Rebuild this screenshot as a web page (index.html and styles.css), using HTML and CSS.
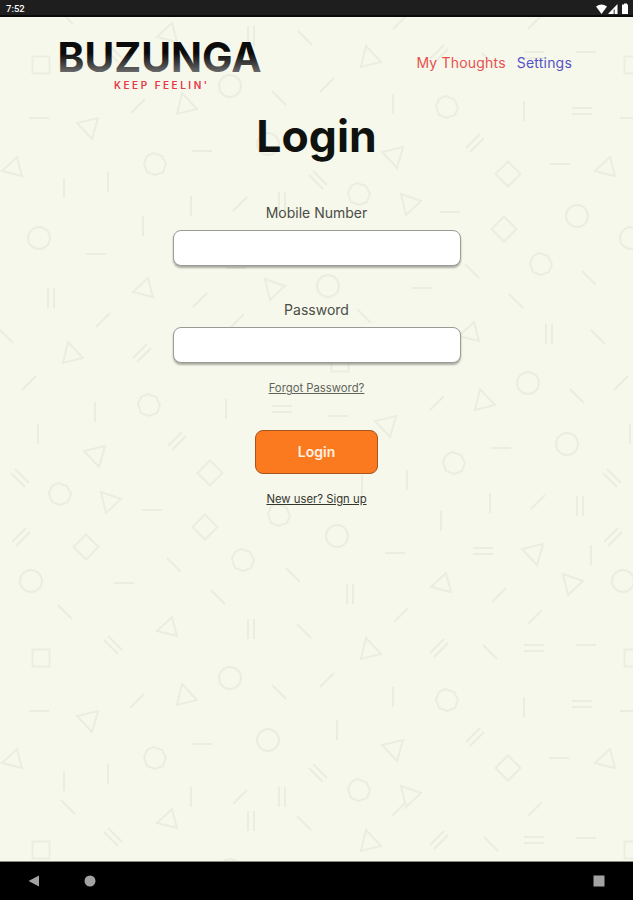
FILE: index.html
```html
<!DOCTYPE html>
<html lang="en">
<head>
  <meta charset="UTF-8">
  <meta name="viewport" content="width=device-width, initial-scale=1.0">
  <title>Buzunga - Login</title>
  <link rel="stylesheet" href="styles.css">
</head>
<body>
  <div class="status-bar">
    <span class="time">7:52</span>
    <svg class="status-icons" width="34" height="12" viewBox="0 0 34 12">
      <path d="M1 3.500Q6.500 -0.500 12 3.500L6.500 11Z"/>
      <path d="M22.500 1V11H13Z"/>
      <path d="M18.500 11V6.500H20V11Z" fill="#777"/>
      <path d="M28 1.500H29V0.500H32V1.500H33V11H27V1.500Z"/>
    </svg>
  </div>

  <main class="screen">
    <svg class="pattern" id="pattern" viewBox="0 17 633 844">
      <defs>
        <path id="triA" d="M-11 3L4 -11L9 8Z"/>
        <path id="triB" d="M-4 -11L11 5L-9 10Z"/>
        <path id="triC" d="M-11 -5L10 -10L4 11Z"/>
        <path id="triD" d="M-9 -10L11 -3L-4 11Z"/>
        <circle id="circle" r="11"/>
        <path id="hept" d="M-2 -11L7 -8L11 0L8 8L0 11L-8 8L-11 -1L-8 -8Z"/>
        <path id="diamond" d="M0 -12.500L12.500 0L0 12.500L-12.500 0Z"/>
        <path id="square" d="M-8.500 -8.500H8.500V8.500H-8.500Z"/>
        <path id="h" d="M-10 0H10"/>
        <path id="v" d="M0 -10V10"/>
        <path id="up" d="M-7 7L7 -7"/>
        <path id="down" d="M-7 -7L7 7"/>
        <path id="hh" d="M-10 -3H10M-10 3H10"/>
        <path id="vv" d="M-3 -10V10M3 -10V10"/>
        <path id="upup" d="M-9 5L5 -9M-5 9L9 -5"/>
        <path id="downdown" d="M-5 -9L9 5M-9 -5L5 9"/>
      </defs>
    </svg>

    <header class="header">
      <div class="logo">
        <svg width="204" height="54" viewBox="0 0 204 54">
          <defs>
            <linearGradient id="logoFill" gradientUnits="userSpaceOnUse" x1="0" y1="3" x2="0" y2="35">
              <stop offset="0.350" stop-color="#0b0b0b"/>
              <stop offset="1" stop-color="#737373"/>
            </linearGradient>
          </defs>
          <text class="logo-name" x="-1.500" y="33" textLength="204" lengthAdjust="spacingAndGlyphs">BUZUNGA</text>
          <text class="logo-tag" x="55" y="50" textLength="93">KEEP FEELIN'</text>
        </svg>
      </div>
      <nav class="nav">
        <a class="thoughts">My Thoughts</a>
        <a class="settings">Settings</a>
      </nav>
    </header>

    <form class="login-form">
      <h1>Login</h1>
      <label for="mobile">Mobile Number</label>
      <input type="text" id="mobile">
      <label for="password">Password</label>
      <input type="password" id="password">
      <a class="forgot">Forgot Password?</a>
      <button type="button">Login</button>
      <a class="signup">New user? Sign up</a>
    </form>
  </main>

  <div class="nav-bar">
    <svg width="12" height="12" viewBox="0 0 12 12"><path d="M0.500 6L11 0.500V11.500Z"/></svg>
    <svg width="12" height="12" viewBox="0 0 12 12"><circle cx="6" cy="6" r="5.500"/></svg>
    <svg class="recent" width="12" height="12" viewBox="0 0 12 12"><rect x="0.500" y="0.500" width="11" height="11"/></svg>
  </div>

  <script>
    // centre of every shape in the background
    const shapes = {
      triA: [[168,34],[13,168],[606,168],[144,289],[470,333],[442,584],[168,628],[13,760],[606,760],[168,820]],
      triB: [[186,104],[370,57],[72,353],[484,400],[186,695],[370,649],[370,841]],
      triC: [[88,128],[393,157],[95,456],[386,426],[533,554],[88,721],[393,750]],
      triD: [[274,289],[410,204],[110,502],[572,584],[410,796]],
      circle: [[230,86],[268,144],[39,238],[577,216],[631,238],[328,286],[528,383],[31,581],[567,444],[337,536],[623,581],[230,678],[268,740],[230,870]],
      hept: [[155,164],[447,107],[359,194],[541,264],[149,405],[60,494],[243,560],[279,515],[454,463],[155,758],[447,700],[359,790]],
      diamond: [[508,174],[504,229],[210,473],[205,527],[86,547],[508,768]],
      square: [[41,65],[633,65],[340,363],[41,658],[633,658],[41,850],[633,850]],
      h: [[39,118],[202,151],[586,52],[630,118],[560,164],[96,254],[236,268],[450,212],[422,288],[152,510],[124,583],[338,416],[501,448],[395,553],[39,711],[202,744],[586,645],[630,711],[559,758],[586,838]],
      v: [[64,188],[108,182],[393,104],[524,111],[191,206],[143,226],[95,412],[226,409],[38,434],[407,480],[362,485],[630,434],[490,503],[441,521],[591,555],[64,781],[108,774],[393,697],[524,707],[337,730],[191,797]],
      up: [[138,106],[400,22],[535,22],[327,85],[240,204],[200,300],[103,320],[29,383],[237,321],[437,403],[621,383],[538,502],[499,595],[401,615],[535,617],[137,701],[327,680],[240,797],[399,809],[535,809]],
      down: [[66,17],[305,38],[279,98],[489,60],[6,336],[472,271],[589,278],[516,301],[364,316],[598,337],[577,396],[174,565],[293,575],[218,597],[65,612],[304,631],[279,692],[490,652],[68,807],[304,823],[491,844]],
      hh: [[534,55],[582,111],[282,409],[483,551],[534,648],[582,704],[534,840]],
      vv: [[251,36],[282,202],[51,298],[549,334],[580,506],[350,594],[251,629],[282,797],[251,821]],
      upup: [[439,54],[475,143],[142,353],[177,441],[21,537],[613,537],[439,648],[475,737],[439,840]],
      downdown: [[113,53],[318,180],[20,478],[612,478],[113,645],[318,773],[113,837]]
    };

    const pattern = document.getElementById("pattern");
    Object.keys(shapes).forEach(name => {
      shapes[name].forEach(([x, y]) => {
        const use = document.createElementNS("http://www.w3.org/2000/svg", "use");
        use.setAttribute("href", "#" + name);
        use.setAttribute("x", x);
        use.setAttribute("y", y);
        pattern.appendChild(use);
      });
    });
  </script>
</body>
</html>
```
FILE: styles.css
```css
* {
  box-sizing: border-box;
}

body {
  margin: 0;
  height: 900px;
  display: flex;
  flex-direction: column;
  overflow: hidden;
  font-family: Inter, sans-serif;
  background-color: #000;
}

.status-bar {
  height: 17px;
  padding: 2px 4px 0 6px;
  display: flex;
  justify-content: space-between;
  background-color: #1e1e1e;
  border-bottom: 2px solid #0a0a0a;
}

.time {
  font-family: Roboto, sans-serif;
  font-size: 9.5px;
  font-weight: 500;
  line-height: 14px;
  color: #fff;
}

.status-icons {
  fill: #fff;
  margin-top: 1px;
}

.screen {
  position: relative;
  height: 844px;
  background-color: #f6f8eb;
  overflow: hidden;
}

.pattern {
  position: absolute;
  top: 0;
  left: 0;
  width: 633px;
  height: 844px;
  fill: none;
  stroke: #ebede0;
  stroke-width: 2;
}

.header {
  position: relative;
  display: flex;
  justify-content: space-between;
  padding: 22px 61px 0 59px;
  height: 92px;
}

.logo svg {
  display: block;
  overflow: visible;
}

.logo-name {
  font-family: Inter, sans-serif;
  font-size: 41px;
  font-weight: 700;
  fill: url(#logoFill);
}

.logo-tag {
  font-family: Inter, sans-serif;
  font-size: 10px;
  font-weight: 600;
  fill: #e8384a;
}

.nav {
  display: flex;
  gap: 11px;
  padding-top: 15px;
  font-size: 14px;
  line-height: 18px;
  letter-spacing: 0.2px;
}

.thoughts {
  color: #e8504f;
}

.settings {
  color: #5552c8;
}

.login-form {
  position: relative;
  display: flex;
  flex-direction: column;
  align-items: center;
}

.login-form h1 {
  margin: 0 0 41px;
  font-size: 44.5px;
  line-height: 54px;
  font-weight: 700;
  color: #10120f;
}

.login-form label {
  font-size: 14px;
  line-height: 18px;
  margin-bottom: 8px;
  color: #4b4d46;
}

.login-form input {
  width: 288px;
  height: 36px;
  margin-bottom: 35px;
  padding: 0 12px;
  background-color: #fff;
  border: 1px solid #999b94;
  border-radius: 8px;
  box-shadow: 0 2px 2px rgba(0, 0, 0, 0.3);
}

.login-form #password {
  margin-bottom: 18px;
}

.login-form a {
  font-size: 11.3px;
  line-height: 14px;
  text-decoration: underline;
}

.forgot {
  color: #63655d;
}

.login-form button {
  width: 123px;
  height: 44px;
  margin: 35px 0 18px;
  padding-bottom: 3px;
  background-color: #fb7a20;
  border: 1px solid #a8541a;
  border-radius: 8px;
  font-family: Inter, sans-serif;
  font-size: 14px;
  font-weight: 600;
  color: #fff0e2;
}

.signup {
  color: #35372f;
}

.nav-bar {
  flex: 1;
  display: flex;
  align-items: center;
  gap: 44px;
  padding: 0 28px;
  background-color: #000;
  border-top: 1px solid #8a8b84;
  fill: #a3a3a3;
}

.recent {
  margin-left: auto;
}
```
